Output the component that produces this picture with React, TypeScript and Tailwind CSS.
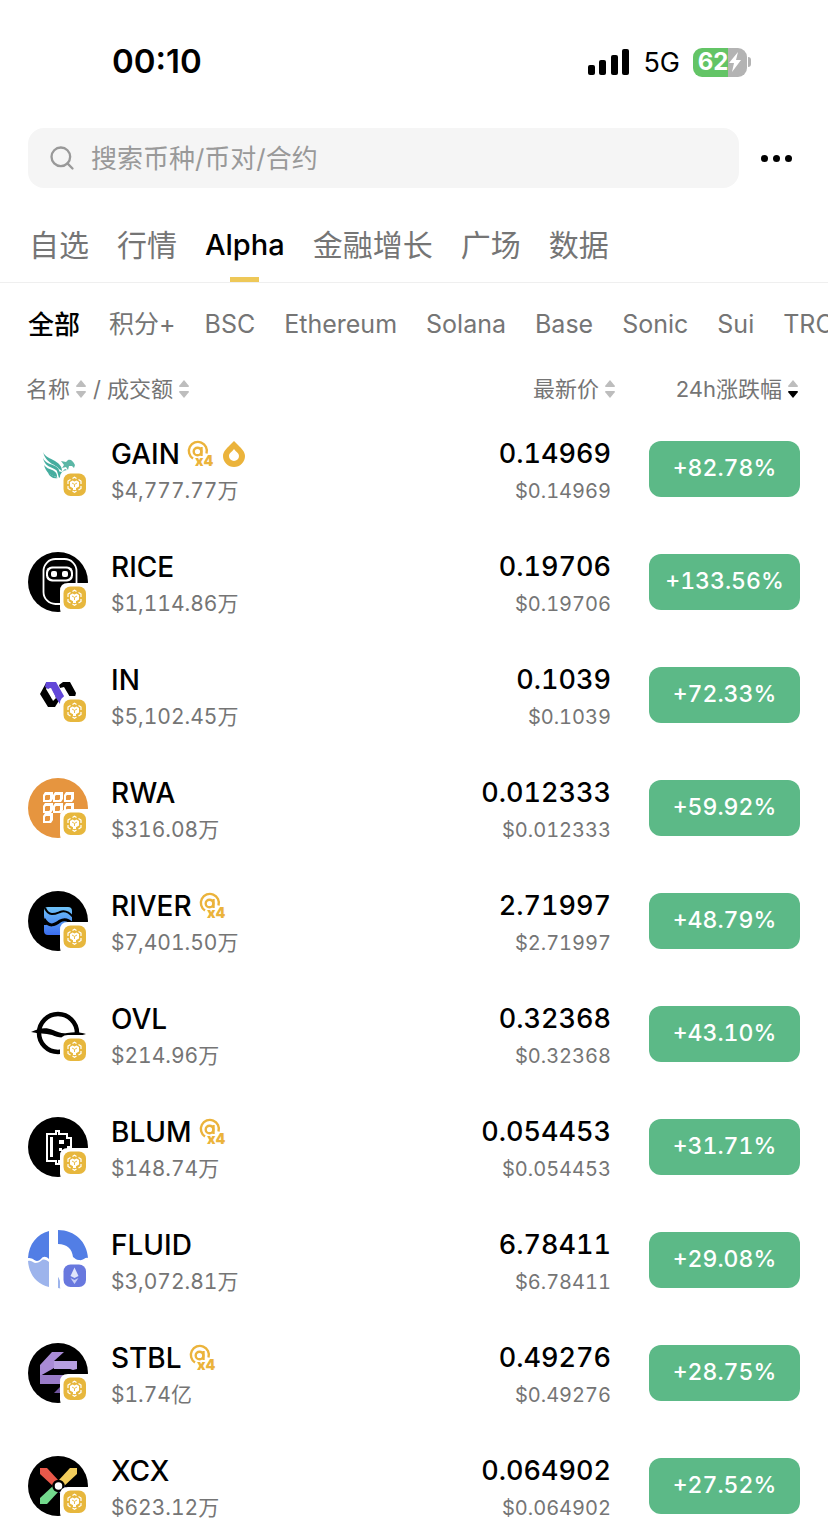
import type { ReactNode } from 'react'
import { Search } from 'lucide-react'

type Token = {
  symbol: string
  volume: string
  price: string
  change: string
  logo: ReactNode
  chain?: 'bsc' | 'eth'
  boost?: boolean
  hot?: boolean
}

const mainTabs = ['自选', '行情', 'Alpha', '金融增长', '广场', '数据']
const chainTabs = ['全部', '积分+', 'BSC', 'Ethereum', 'Solana', 'Base', 'Sonic', 'Sui', 'TRON']

/* Token logos, all drawn on a 60x60 grid */

const GainLogo = (
  <>
    <g fill="#45ad9f">
      <path d="M15 13c2 5 7 6 12 9 5 3 7 6 7 10l-3-2c-3-5-13-5-16-17z" />
      <path d="M15 19c2 5 8 6 12 8 4 2 5 5 4 8l-2-3c-3-4-12-3-14-13z" />
      <path d="M16 26c3 4 7 4 10 6 3 2 3 4 3 6-6-1-11-4-13-12z" />
      <path d="M20 34c3 2 6 3 10 5-5 1-8-1-10-5z" />
      <path d="M29 32l5 1 3-3 2 1-5 5-3 3z" />
    </g>
    <path d="M33 22l5 1 2-2c3-1 5 1 7 5l-1 3-2-2-3 0-1 4-2-3-4 1 2-3z" fill="#5bb7a6" />
  </>
)

const RiceLogo = (
  <>
    <circle cx="30" cy="30" r="30" fill="#000" />
    <rect x="15.500" y="7" width="33" height="45" rx="12" fill="none" stroke="#fff" strokeWidth="1.800" />
    <rect x="18" y="14.500" width="27" height="15" rx="6" fill="#fff" />
    <rect x="20" y="16.500" width="23" height="11" rx="5" fill="#000" />
    <rect x="23" y="19" width="6" height="6" rx="2" fill="#fff" />
    <rect x="34" y="19" width="6" height="6" rx="2" fill="#fff" />
  </>
)

const InLogo = (
  <>
    <path d="M18 18l-6 11 8 13h7l5-8-4-3-4 3-6-10 3-5z" fill="#000" />
    <path d="M31 20l4-3h7l6 11-1 4h-5l-6-10-4 1z" fill="#000" />
    <path d="M18 17h10l8 14-4 8-4-6-5-10-3 1-3-2z" fill="#6247d8" />
    <path d="M20 25l2-2 6 10-3 3z" fill="#fff" />
  </>
)

const rwaCells = [
  [15, 14], [25, 14], [36, 14],
  [15, 25], [25, 25], [36, 25],
  [15, 35],
]

const RwaLogo = (
  <>
    <circle cx="30" cy="30" r="30" fill="#e6953f" />
    {rwaCells.map(([x, y]) => (
      <g key={`${x}-${y}`}>
        <path d={`M${x + 2} ${y}h8v7l-2 3h-8v-7z`} fill="#fff" />
        <path d={`M${x + 2} ${y + 4}l1-1h4v4l-1 1h-4z`} fill="#e6953f" />
      </g>
    ))}
  </>
)

const RiverLogo = (
  <>
    <defs>
      <linearGradient id="river" x1="0" y1="0" x2="0" y2="1">
        <stop offset="0" stopColor="#6fc3f8" />
        <stop offset="1" stopColor="#3b6df0" />
      </linearGradient>
    </defs>
    <circle cx="30" cy="30" r="30" fill="#000" />
    <path
      d="M20 16h20q4 0 4 4v18q0 6-5 6H20q-4 0-4-4v-6q4 0 5-2-5-2-5-7v-5q0-4 4-4z"
      fill="url(#river)"
    />
    <path d="M17 17c4 9 10 6 15 4 5-2 9 0 13 5" fill="none" stroke="#000" strokeWidth="2" />
    <path d="M16 28c5 9 11 6 16 2 5-3 9-1 13 3" fill="none" stroke="#000" strokeWidth="3" />
  </>
)

const OvlLogo = (
  <>
    <circle cx="30" cy="29" r="19" fill="none" stroke="#000" strokeWidth="4.500" />
    <path d="M3 28c8-4 15-5 22-2 5 2 9 4 14 3 7-1 13-1 19 1-6 2-11 2-17 2-7 3-12 1-17-1-7-2-13-1-21-3z" fill="#000" />
  </>
)

const BlumLogo = (
  <>
    <circle cx="30" cy="30" r="30" fill="#000" />
    <path
      d="M19 17h9v-3h3v3h8v4h4v9h-3v3h3v11h-12v3h-3v-3h-9z"
      fill="none"
      stroke="#fff"
      strokeWidth="2"
    />
    <path d="M22 20h3v20h-3zM31 23h5v4h-5zM31 31h3v3h-3zM36 33h4v3h-4z" fill="#fff" />
  </>
)

const FluidLogo = (
  <>
    <path d="M0 28C1 14 9 4 21 1v28c-3-3-6-3-8 0-3 3-6 2-8 0-2-1-3-1-5-1z" fill="#527ee5" />
    <path d="M0 31c3-1 4 1 7 2 3 0 5-1 7-3 2-1 5 0 7 2v25C8 54 1 44 0 31z" fill="#9db4ec" />
    <path d="M30 0c17 0 29 12 30 28-3-1-5 3-9 2-3 0-4-2-6-3-1-8-6-13-15-13z" fill="#527ee5" />
    <path d="M30 47c2 2 2 6 5 12l-5-1z" fill="#9db4ec" />
  </>
)

const StblLogo = (
  <>
    <circle cx="30" cy="30" r="30" fill="#000" />
    <path d="M12 22L24 9h12L26 18v7L12 33z" fill="#a98bd6" />
    <path d="M26 18h23v8l-4 1-3-1H26z" fill="#b79fe0" />
    <path d="M12 32h38v9H12z" fill="#9a7cc8" />
    <path d="M26 50l8-8v8z" fill="#70559e" />
  </>
)

const XcxLogo = (
  <>
    <circle cx="30" cy="30" r="30" fill="#000" />
    <path d="M12 12h7l12 13-5 6-14-13z" fill="#e9584a" />
    <path d="M49 12h-7L30 25l5 6 14-13z" fill="#f2cd5c" />
    <path d="M12 48h7l12-13-5-6-14 13z" fill="#72d98c" />
    <path d="M49 48h-7L30 35l5-6 14 13z" fill="#5b62e8" />
    <circle cx="30.500" cy="30" r="5" fill="#fff" stroke="#000" strokeWidth="2.500" />
  </>
)

const tokens: Token[] = [
  { symbol: 'GAIN', volume: '$4,777.77万', price: '0.14969', change: '+82.78%', logo: GainLogo, boost: true, hot: true },
  { symbol: 'RICE', volume: '$1,114.86万', price: '0.19706', change: '+133.56%', logo: RiceLogo },
  { symbol: 'IN', volume: '$5,102.45万', price: '0.1039', change: '+72.33%', logo: InLogo },
  { symbol: 'RWA', volume: '$316.08万', price: '0.012333', change: '+59.92%', logo: RwaLogo },
  { symbol: 'RIVER', volume: '$7,401.50万', price: '2.71997', change: '+48.79%', logo: RiverLogo, boost: true },
  { symbol: 'OVL', volume: '$214.96万', price: '0.32368', change: '+43.10%', logo: OvlLogo },
  { symbol: 'BLUM', volume: '$148.74万', price: '0.054453', change: '+31.71%', logo: BlumLogo, boost: true },
  { symbol: 'FLUID', volume: '$3,072.81万', price: '6.78411', change: '+29.08%', logo: FluidLogo, chain: 'eth' },
  { symbol: 'STBL', volume: '$1.74亿', price: '0.49276', change: '+28.75%', logo: StblLogo, boost: true },
  { symbol: 'XCX', volume: '$623.12万', price: '0.064902', change: '+27.52%', logo: XcxLogo },
]

function ChainMark({ chain }: { chain: 'bsc' | 'eth' }) {
  return (
    <>
      <path d="M61 31H40q-8 0-8 8v18q0 3 2 4h27z" fill="#fff" />
      <rect x="35.500" y="34.500" width="22.500" height="22.500" rx="7" fill={chain === 'eth' ? '#6878de' : '#e7b73d'} />
      {chain === 'eth' ? (
        <>
          <path d="M46.500 37.500l-4 8.500 4 2 4-2z" fill="#dfe4fb" />
          <path d="M42.500 48l4 6 4-6-4 2z" fill="#c5cdf6" />
        </>
      ) : (
        <>
          <path
            d="M44.500 39.500l2-1.200 2 1.200M50.500 40.500l2.500 1.500v3M53 47v2.500L50.500 51M48.500 52l-2 1.200-2-1.200M42.500 51L40 49.500V47M40 45v-3l2.500-1.500"
            fill="none"
            stroke="#fff"
            strokeWidth="1.200"
          />
          <path d="M42 43l2.500-1.500 2 1 2-1L51 43v4.500l-3 1.700V51h-3v-1.800l-3-1.700z" fill="#fff" />
          <path d="M44 44l2.500 1.400L49 44M46.500 45.500V48" fill="none" stroke="#e7b73d" strokeWidth="0.900" />
        </>
      )}
    </>
  )
}

function BoostIcon() {
  return (
    <svg viewBox="0 0 28 28" className="size-7 overflow-visible" role="img" aria-label="@ x4">
      <g fill="none" stroke="#ebb33b" strokeWidth="2.400">
        <path d="M6 18.500a9 9 0 1 1 13.500-5" />
        <circle cx="10.500" cy="11.500" r="3.800" />
        <path d="M14.500 7v9" />
      </g>
      <text x="8" y="26" fill="#ebb33b" fontFamily="Inter" fontSize="14" fontWeight="900">x4</text>
    </svg>
  )
}

function HotIcon() {
  return (
    <svg viewBox="0 0 24 28" className="h-7 w-6" aria-hidden="true">
      <path
        d="M12 1l-4 4c-4 4-7 7-7 11a11 11 0 0 0 22 0c0-4-3-7-7-11zm0 8c2 3 5 4 5 7a5 5 0 0 1-10 0c0-3 3-4 5-7z"
        fill="#ebb33b"
        fillRule="evenodd"
      />
    </svg>
  )
}

function SortIcon({ desc = false }: { desc?: boolean }) {
  return (
    <svg viewBox="0 0 12 20" className="h-5 w-3" aria-hidden="true">
      <path d="M6 1l5 6q0 1-1 1H2q-1 0-1-1z" fill="#bdbdbd" />
      <path d="M6 19l5-6q0-1-1-1H2q-1 0-1 1z" fill={desc ? '#000' : '#bdbdbd'} />
    </svg>
  )
}

function StatusBar() {
  return (
    <div className="mb-1 flex h-[124px] shrink-0 items-center justify-between pr-[77px] pl-28">
      <span className="text-[33px] font-semibold">00:10</span>
      <div className="flex items-center gap-[13px]">
        <svg viewBox="0 0 42 26" className="h-[26px] w-[42px]" aria-hidden="true">
          <rect x="0" y="16" width="7" height="10" rx="2" />
          <rect x="11" y="11" width="7" height="15" rx="2" />
          <rect x="23" y="6" width="7" height="20" rx="2" />
          <rect x="34" y="0" width="7" height="26" rx="2" />
        </svg>
        <span className="pt-0.5 text-[27px] leading-8">5G</span>
        <div className="flex items-center gap-px">
          <div className="flex h-[29px] w-[54px] items-center justify-center rounded-[9px] bg-linear-to-r from-[#63c466] from-64% to-[#b3b3b3] to-64%">
            <span className="text-2xl font-bold text-white">62</span>
            <svg viewBox="0 0 14 20" className="h-5 w-3.5" aria-hidden="true">
              <path d="M10 0L1 11h5l-2 9 9-12H8z" fill="#fff" />
            </svg>
          </div>
          <div className="h-2.5 w-[3px] rounded-r-full bg-[#b3b3b3]" />
        </div>
      </div>
    </div>
  )
}

function TokenRow({ token }: { token: Token }) {
  return (
    <li className="flex h-[113px] shrink-0 items-center px-7">
      <svg viewBox="0 0 60 60" className="size-[60px] shrink-0 overflow-visible" aria-hidden="true">
        {token.logo}
        <ChainMark chain={token.chain ?? 'bsc'} />
      </svg>
      <div className="ml-[23px] flex-1 pt-1">
        <div className="flex h-10 items-center gap-[7px]">
          <span className="text-[28px] font-medium">{token.symbol}</span>
          {token.boost && <BoostIcon />}
          {token.hot && <HotIcon />}
        </div>
        <div className="text-[21px] leading-[34px] text-[#757575] tabular-nums">{token.volume}</div>
      </div>
      <div className="pt-1 text-right tabular-nums">
        <div className="text-[27px] leading-10 font-medium">{token.price}</div>
        <div className="text-xl leading-[34px] text-[#757575]">${token.price}</div>
      </div>
      <button className="ml-[38px] h-14 w-[151px] shrink-0 rounded-xl bg-[#5cb987] text-[23px] font-medium text-white tabular-nums">
        {token.change}
      </button>
    </li>
  )
}

export default function App() {
  return (
    <div className="flex h-screen flex-col overflow-hidden bg-white font-['Inter','Noto_Sans_CJK_SC',sans-serif] text-black">
      <StatusBar />

      <div className="flex shrink-0 items-center gap-[22px] pr-9 pl-7">
        <label className="flex h-[60px] flex-1 items-center gap-[15px] rounded-2xl bg-[#f5f5f5] px-5">
          <Search className="size-7 text-[#999]" strokeWidth={2} />
          <input
            type="text"
            aria-label="搜索"
            placeholder="搜索币种/币对/合约"
            className="min-w-0 flex-1 bg-transparent text-[26px] outline-none placeholder:text-[#999]"
          />
        </label>
        <button aria-label="更多" className="flex h-10 items-center gap-[5px]">
          <span className="size-[7px] rounded-full bg-black" />
          <span className="size-[7px] rounded-full bg-black" />
          <span className="size-[7px] rounded-full bg-black" />
        </button>
      </div>

      <nav className="flex h-[95px] shrink-0 items-end gap-7 border-b border-[#efefef] pl-[29px]">
        {mainTabs.map((tab) => (
          <button
            key={tab}
            className={`flex h-[72px] flex-col items-center justify-between whitespace-nowrap ${
              tab === 'Alpha' ? 'text-[29px] font-medium text-black' : 'text-[30px] text-[#757575]'
            }`}
          >
            <span className="leading-[70px]">{tab}</span>
            {tab === 'Alpha' && <span className="-mt-1 h-[5px] w-[29px] shrink-0 bg-[#eec858]" />}
          </button>
        ))}
      </nav>

      <div className="flex h-[83px] shrink-0 items-center gap-[29px] overflow-hidden pl-7">
        {chainTabs.map((tab) => (
          <button
            key={tab}
            className={`shrink-0 whitespace-nowrap ${
              tab === '全部' ? 'text-[26px] font-medium text-black' : 'text-[25px] text-[#757575]'
            }`}
          >
            {tab}
          </button>
        ))}
      </div>

      <div className="flex h-[46px] shrink-0 items-center pr-[29px] pl-[26px] text-[22px] text-[#757575]">
        <button className="flex items-center gap-[5px]">名称<SortIcon /></button>
        <span className="mx-1.5">/</span>
        <button className="flex items-center gap-[5px]">成交额<SortIcon /></button>
        <button className="ml-auto flex items-center gap-[5px]">最新价<SortIcon /></button>
        <button className="flex w-[183px] items-center justify-end gap-[5px]">24h涨跌幅<SortIcon desc /></button>
      </div>

      <ul className="flex min-h-0 flex-1 flex-col overflow-y-auto [scrollbar-width:none]">
        {tokens.map((token) => (
          <TokenRow key={token.symbol} token={token} />
        ))}
      </ul>
    </div>
  )
}
